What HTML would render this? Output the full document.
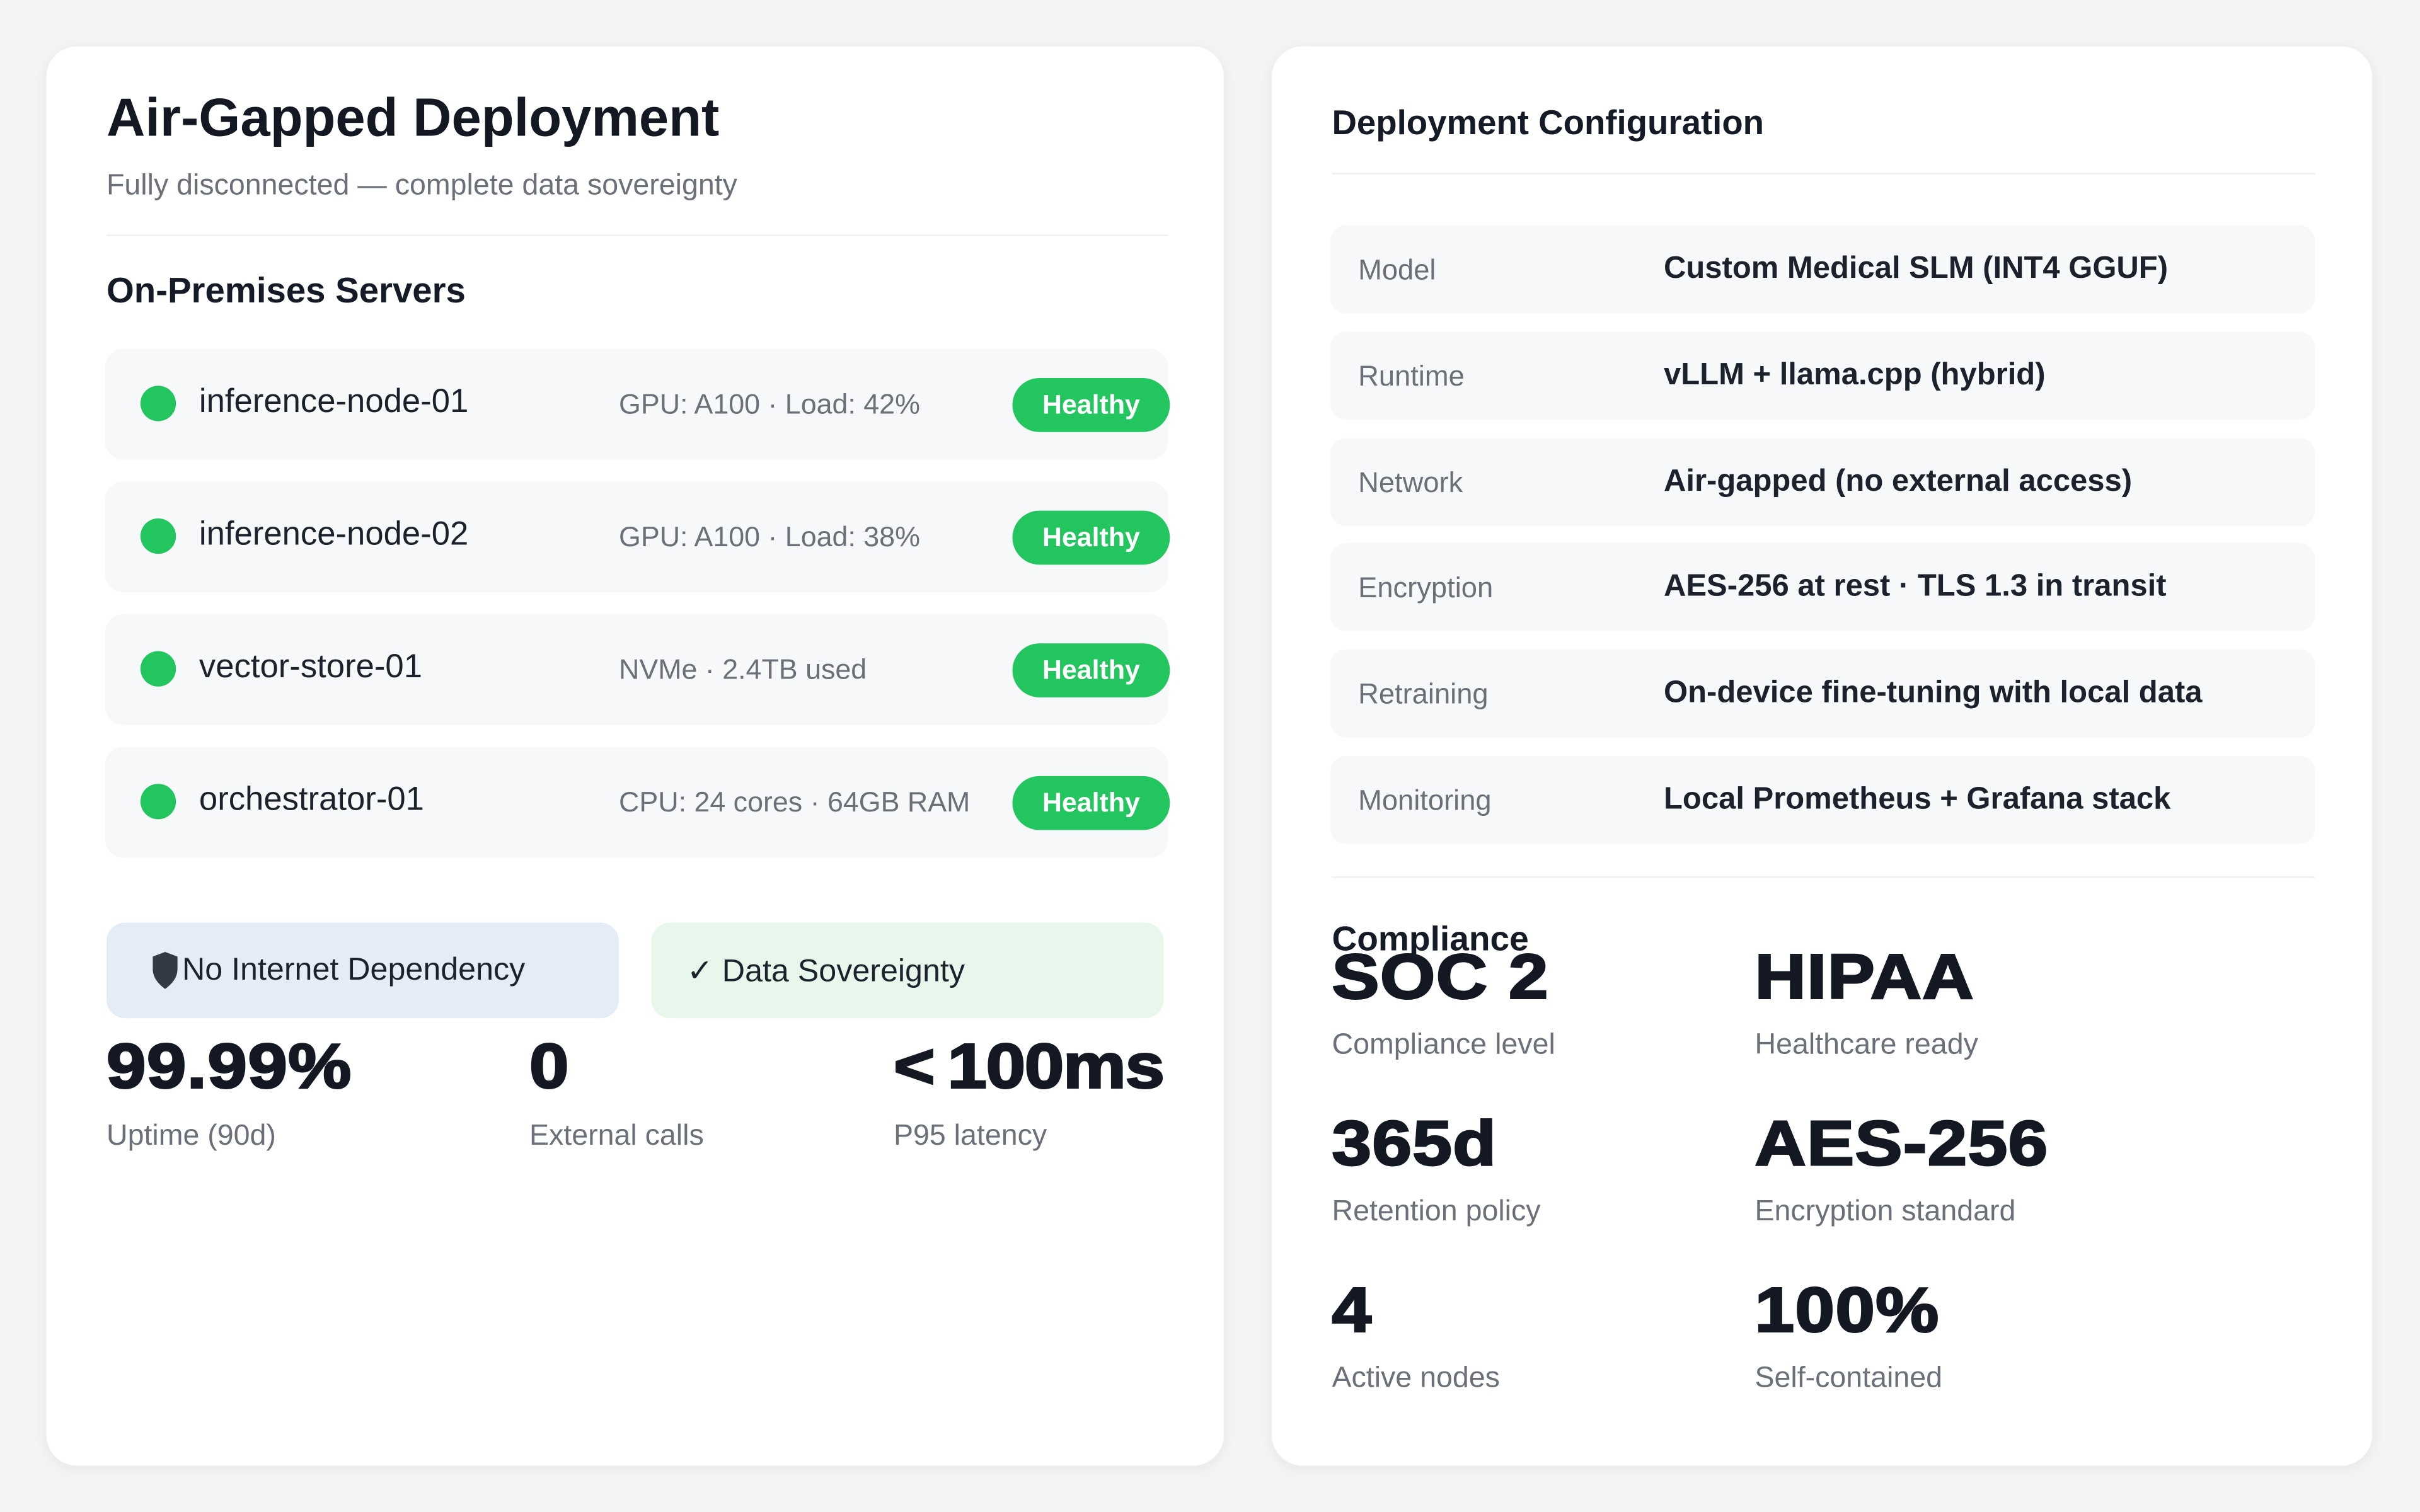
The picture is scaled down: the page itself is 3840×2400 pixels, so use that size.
<!DOCTYPE html>
<html><head><meta charset="utf-8"><style>
*{margin:0;padding:0;box-sizing:border-box}
html,body{width:3840px;height:2400px;overflow:hidden;background:#f2f4f6}
#w{position:absolute;left:0;top:0;width:1568px;height:980px;transform:scale(2.44898);transform-origin:0 0;font-family:"Liberation Sans",sans-serif;color:#151b26}
.card{position:absolute;background:#fff;border-radius:20px;box-shadow:0 2px 10px rgba(0,0,0,.06)}
.a{position:absolute;white-space:nowrap}
.row{position:absolute;left:38px;width:689px;height:72px;background:#f7f8f9;border-radius:12px}
.dot{position:absolute;left:23px;top:24px;width:23px;height:23px;border-radius:50%;background:#22c55e}
.nm{position:absolute;left:61px;top:22px;font-size:21.5px;color:#1c222c}
.inf{position:absolute;left:333px;top:25px;font-size:18.3px;color:#6b7078}
.bd{position:absolute;left:588px;top:19px;width:102px;height:35px;border-radius:18px;background:#22c55e;color:#fff;font-weight:bold;font-size:17.5px;text-align:center;line-height:35px}
.big{position:absolute;font-size:41px;font-weight:bold;letter-spacing:0.5px;color:#131822;-webkit-text-stroke:1.2px #131822;transform:scaleX(1.12);transform-origin:0 0}
.lb{position:absolute;font-size:19px;color:#6b7078}
.cr{position:absolute;left:38px;width:638px;height:57px;background:#f7f8f9;border-radius:10px}
.cl{position:absolute;left:18px;top:18px;font-size:18.5px;color:#6b7078}
.cv{position:absolute;left:216px;top:17px;font-size:20px;font-weight:bold;color:#1c222c}
.hr{position:absolute;height:1px;background:#eef0f2}
</style></head><body><div id="w">
<div class="card" style="left:30px;top:30px;width:763px;height:920px">
<div class="a" style="left:39px;top:28px;font-size:34.7px;font-weight:bold;color:#131822">Air-Gapped Deployment</div>
<div class="a" style="left:39px;top:80px;font-size:19px;color:#6b7078">Fully disconnected — complete data sovereignty</div>
<div class="hr" style="left:39px;top:122px;width:688px"></div>
<div class="a" style="left:39px;top:145px;font-size:23px;font-weight:bold">On-Premises Servers</div>
<div class="row" style="top:196px"><div class="dot"></div><div class="nm">inference-node-01</div><div class="inf">GPU: A100 · Load: 42%</div><div class="bd">Healthy</div></div>
<div class="row" style="top:282px"><div class="dot"></div><div class="nm">inference-node-02</div><div class="inf">GPU: A100 · Load: 38%</div><div class="bd">Healthy</div></div>
<div class="row" style="top:368px"><div class="dot"></div><div class="nm">vector-store-01</div><div class="inf">NVMe · 2.4TB used</div><div class="bd">Healthy</div></div>
<div class="row" style="top:454px"><div class="dot"></div><div class="nm">orchestrator-01</div><div class="inf">CPU: 24 cores · 64GB RAM</div><div class="bd">Healthy</div></div>
<div class="a" style="left:39px;top:568px;width:332px;height:62px;background:#e5ecf6;border-radius:12px"><svg style="position:absolute;left:29px;top:18px" width="18" height="26" viewBox="0 0 18 26"><path d="M9 1 L17 4 V12 C17 18 13 22 9 25 C5 22 1 18 1 12 V4 Z" fill="#333a45"/></svg><span style="position:absolute;left:49px;top:19px;font-size:20.5px;color:#1c222c">No Internet Dependency</span></div>
<div class="a" style="left:392px;top:568px;width:332px;height:62px;background:#e8f7ec;border-radius:12px"><span style="position:absolute;left:23px;top:19px;font-size:20.5px;color:#1c222c">✓ Data Sovereignty</span></div>
<div class="big" style="left:39px;top:638px">99.99%</div>
<div class="big" style="left:313px;top:638px">0</div>
<div class="big" style="left:549px;top:638px;letter-spacing:-0.5px">&lt;&thinsp;100ms</div>
<div class="lb" style="left:39px;top:696px">Uptime (90d)</div>
<div class="lb" style="left:313px;top:696px">External calls</div>
<div class="lb" style="left:549px;top:696px">P95 latency</div>
</div>
<div class="card" style="left:824px;top:30px;width:713px;height:920px">
<div class="a" style="left:39px;top:37px;font-size:22.3px;font-weight:bold">Deployment Configuration</div>
<div class="hr" style="left:39px;top:82px;width:637px"></div>
<div class="cr" style="top:116px"><div class="cl">Model</div><div class="cv">Custom Medical SLM (INT4 GGUF)</div></div>
<div class="cr" style="top:185px"><div class="cl">Runtime</div><div class="cv">vLLM + llama.cpp (hybrid)</div></div>
<div class="cr" style="top:254px"><div class="cl">Network</div><div class="cv">Air-gapped (no external access)</div></div>
<div class="cr" style="top:322px"><div class="cl">Encryption</div><div class="cv">AES-256 at rest · TLS 1.3 in transit</div></div>
<div class="cr" style="top:391px"><div class="cl">Retraining</div><div class="cv">On-device fine-tuning with local data</div></div>
<div class="cr" style="top:460px"><div class="cl">Monitoring</div><div class="cv">Local Prometheus + Grafana stack</div></div>
<div class="hr" style="left:39px;top:538px;width:637px"></div>
<div class="big" style="left:39px;top:580px">SOC 2</div>
<div class="a" style="left:39px;top:566px;font-size:22.5px;font-weight:bold">Compliance</div>
<div class="big" style="left:313px;top:580px">HIPAA</div>
<div class="lb" style="left:39px;top:637px">Compliance level</div>
<div class="lb" style="left:313px;top:637px">Healthcare ready</div>
<div class="big" style="left:39px;top:688px">365d</div>
<div class="big" style="left:313px;top:688px">AES-256</div>
<div class="lb" style="left:39px;top:745px">Retention policy</div>
<div class="lb" style="left:313px;top:745px">Encryption standard</div>
<div class="big" style="left:39px;top:796px">4</div>
<div class="big" style="left:313px;top:796px">100%</div>
<div class="lb" style="left:39px;top:853px">Active nodes</div>
<div class="lb" style="left:313px;top:853px">Self-contained</div>
</div>
</div></body></html>
